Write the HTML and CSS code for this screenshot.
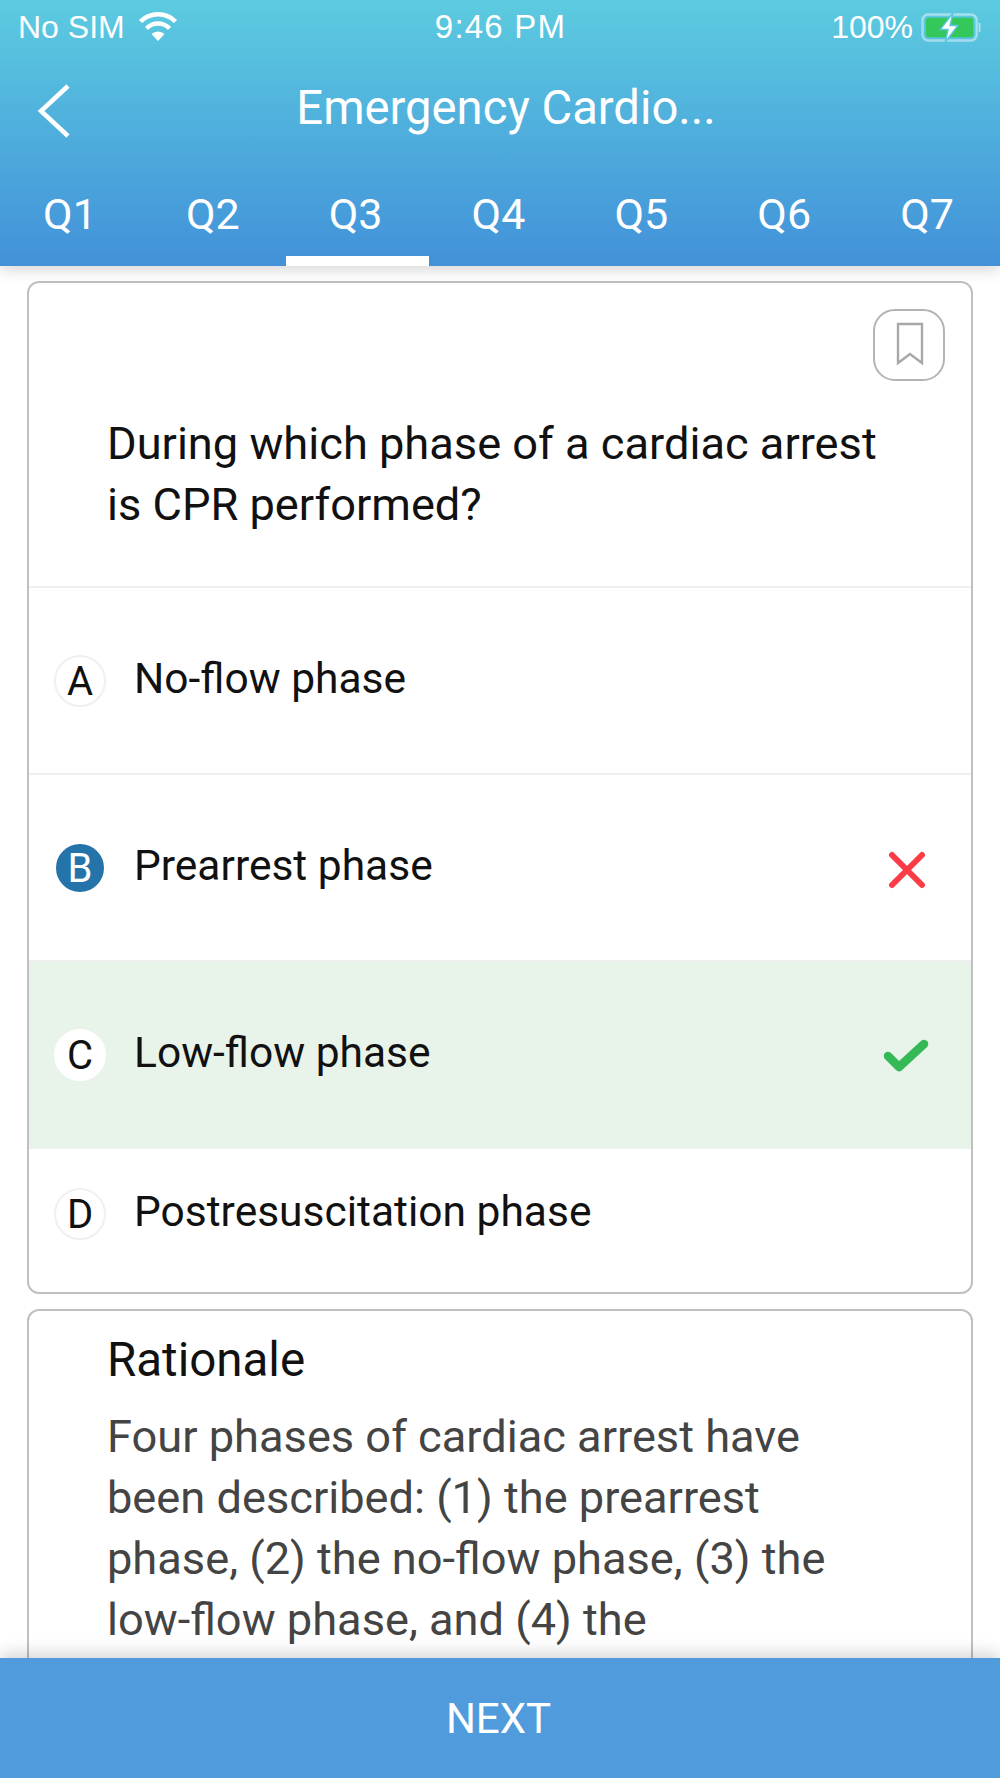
FILE: index.html
```html
<!DOCTYPE html>
<html lang="en">
<head>
<meta charset="utf-8">
<title>Emergency Cardio...</title>
<link rel="stylesheet" href="styles.css">
</head>
<body>
<div class="screen">
  <header class="header">
    <div class="status">
      <div class="status-left">
        <span>No SIM</span>
        <svg class="wifi" viewBox="0 0 40 30"><path d="M20 29 L13.5 22 A9.5 9.5 0 0 1 26.500 22 Z" fill="#fff"/><path d="M8.500 16.500 A16 16 0 0 1 31.500 16.500" fill="none" stroke="#fff" stroke-width="4.500"/><path d="M2.500 9.500 A25 25 0 0 1 37.500 9.500" fill="none" stroke="#fff" stroke-width="4.500"/></svg>
      </div>
      <span class="status-time">9:46 PM</span>
      <div class="status-right">
        <span>100%</span>
        <svg class="battery" viewBox="0 0 64 30"><rect x="1.500" y="1.500" width="56" height="27" rx="6" fill="none" stroke="#fff" stroke-opacity=".45" stroke-width="2.500"/><rect x="5" y="5" width="49" height="20" rx="3" fill="#34c85a"/><path d="M60.500 11 V19" stroke="#fff" stroke-opacity=".5" stroke-width="2" stroke-linecap="round"/><path d="M33 0 L20 17 H28 L25 30 L38 13 H30 Z" fill="#fff" stroke="#5ac6e0" stroke-width="1.500"/></svg>
      </div>
    </div>
    <div class="nav">
      <svg class="back" viewBox="0 0 34 54"><path d="M31 2 L4 27 L31 52" fill="none" stroke="#fff" stroke-width="4.500"/></svg>
      <h1 class="title">Emergency Cardio...</h1>
    </div>
    <nav class="tabs">
      <span class="tab">Q1</span>
      <span class="tab">Q2</span>
      <span class="tab tab-active">Q3</span>
      <span class="tab">Q4</span>
      <span class="tab">Q5</span>
      <span class="tab">Q6</span>
      <span class="tab">Q7</span>
    </nav>
  </header>

  <main class="content">
    <section class="card">
      <div class="question">
        <div class="bookmark-row">
          <button class="bookmark" type="button" aria-label="Bookmark">
            <svg viewBox="0 0 28 44"><path d="M2 2 H26 V41 L14 32 L2 41 Z" fill="none" stroke="#a8a8a8" stroke-width="2.400"/></svg>
          </button>
        </div>
        <p class="question-text">During which phase of a cardiac arrest is CPR performed?</p>
      </div>
      <div class="option">
        <span class="letter">A</span>
        <span class="option-text">No-flow phase</span>
      </div>
      <div class="option">
        <span class="letter letter-chosen">B</span>
        <span class="option-text">Prearrest phase</span>
        <svg class="mark mark-x" viewBox="0 0 38 38"><path d="M4 4 L34 34 M34 4 L4 34" fill="none" stroke="#fb3b46" stroke-width="6" stroke-linecap="round"/></svg>
      </div>
      <div class="option option-correct">
        <span class="letter letter-plain">C</span>
        <span class="option-text">Low-flow phase</span>
        <svg class="mark mark-check" viewBox="0 0 46 36"><path d="M5 18 L16 29 L41 6" fill="none" stroke="#35b957" stroke-width="8.500" stroke-linecap="round" stroke-linejoin="round"/></svg>
      </div>
      <div class="option option-last">
        <span class="letter">D</span>
        <span class="option-text">Postresuscitation phase</span>
      </div>
    </section>

    <section class="card rationale">
      <h2 class="rationale-title">Rationale</h2>
      <p class="rationale-text">Four phases of cardiac arrest have been described: (1) the prearrest phase, (2) the no-flow phase, (3) the low-flow phase, and (4) the</p>
    </section>
  </main>

  <footer class="footer">NEXT</footer>
</div>
</body>
</html>
```
FILE: styles.css
```css
* { box-sizing: border-box; }
html, body { margin: 0; padding: 0; }
body { background: #fff; font-family: Roboto, "Liberation Sans", sans-serif; }

.screen {
  width: 1000px;
  height: 1778px;
  display: flex;
  flex-direction: column;
  overflow: hidden;
  background: #fff;
}

.header {
  height: 266px;
  flex: none;
  position: relative;
  z-index: 2;
  color: #fff;
  background: linear-gradient(180deg, #5ccbe0 0%, #4291d9 100%);
  box-shadow: 0 4px 14px rgba(0, 0, 0, .16);
  display: flex;
  flex-direction: column;
}

.status {
  height: 54px;
  padding: 0 17px 0 18px;
  display: grid;
  grid-template-columns: 1fr auto 1fr;
  align-items: center;
  font-family: "Liberation Sans", Arial, sans-serif;
  font-size: 32px;
}
.status-left { display: flex; align-items: center; gap: 13px; }
.status-right { display: flex; align-items: center; justify-content: flex-end; gap: 8px; }
.status-time { font-size: 33px; letter-spacing: 1.2px; }
.wifi { width: 40px; height: 30px; }
.battery { width: 62px; height: 29px; }

.nav {
  height: 107px;
  position: relative;
  display: flex;
  align-items: center;
  justify-content: center;
}
.back { position: absolute; left: 37px; top: 30px; width: 34px; height: 54px; }
.title {
  margin: 0 0 0 12px;
  font-size: 47.200px;
  font-weight: 400;
  color: #fff;
}

.tabs {
  flex: 1;
  display: grid;
  grid-template-columns: repeat(7, 1fr);
}
.tab {
  display: flex;
  align-items: center;
  justify-content: center;
  padding-right: 3px;
  font-size: 43px;
}
.tab-active { border-bottom: 10px solid #fff; padding-top: 10px; }

.content {
  flex: 1;
  min-height: 0;
  overflow: hidden;
  padding: 15px 27px 0;
  display: flex;
  flex-direction: column;
  gap: 15px;
}

.card {
  flex: none;
  background: #fff;
  border: 2px solid #c0c0c0;
  border-radius: 12px;
  overflow: hidden;
}

.question {
  height: 305px;
  padding: 26px 26px 0 78px;
  border-bottom: 2px solid #efefef;
}
.bookmark-row { display: flex; justify-content: flex-end; height: 72px; }
.bookmark {
  width: 72px;
  height: 72px;
  padding: 0 0 2px 1px;
  background: #fff;
  border: 2px solid #b4b4b4;
  border-radius: 22px;
  display: flex;
  align-items: center;
  justify-content: center;
}
.bookmark svg { width: 28px; height: 44px; }
.question-text {
  margin: 32px 40px 0 0;
  font-size: 45.200px;
  line-height: 61px;
  color: #111;
}

.option {
  height: 187px;
  padding: 67px 40px 0 25px;
  display: flex;
  align-items: flex-start;
  gap: 28px;
  border-bottom: 2px solid #efefef;
}
.option-correct { background: #e8f3e9; border-bottom: 0; height: 187px; }
.option-last { height: 143px; padding-top: 39px; border-bottom: 0; }

.letter {
  flex: none;
  width: 52px;
  height: 52px;
  border: 2px solid #f0f0f0;
  border-radius: 50%;
  background: #fff;
  color: #111;
  font-size: 40px;
  display: flex;
  align-items: center;
  justify-content: center;
}
.letter-chosen { background: #2574a9; border-color: #fff; color: #fff; }
.letter-plain { border-color: #fff; }

.option-text {
  font-size: 42.500px;
  line-height: 52px;
  margin-top: -2px;
  color: #111;
}

.mark { margin-left: auto; flex: none; }
.mark-x { width: 38px; height: 38px; margin-top: 9px; margin-right: 5px; }
.mark-check { width: 46px; height: 36px; margin-top: 9px; margin-right: 2px; }

.rationale {
  padding: 0 110px 60px 78px;
}
.rationale-title {
  margin: 18px 0 0;
  font-size: 47.500px;
  font-weight: 400;
  line-height: 62px;
  color: #111;
}
.rationale-text {
  margin: 15px 0 0;
  font-size: 45.200px;
  line-height: 61px;
  color: #444;
}

.footer {
  height: 120px;
  flex: none;
  position: relative;
  z-index: 2;
  padding-right: 3px;
  background: #4f9bdc;
  box-shadow: 0 -4px 16px rgba(0, 0, 0, .18);
  color: #fff;
  font-size: 42px;
  display: flex;
  align-items: center;
  justify-content: center;
}
```
